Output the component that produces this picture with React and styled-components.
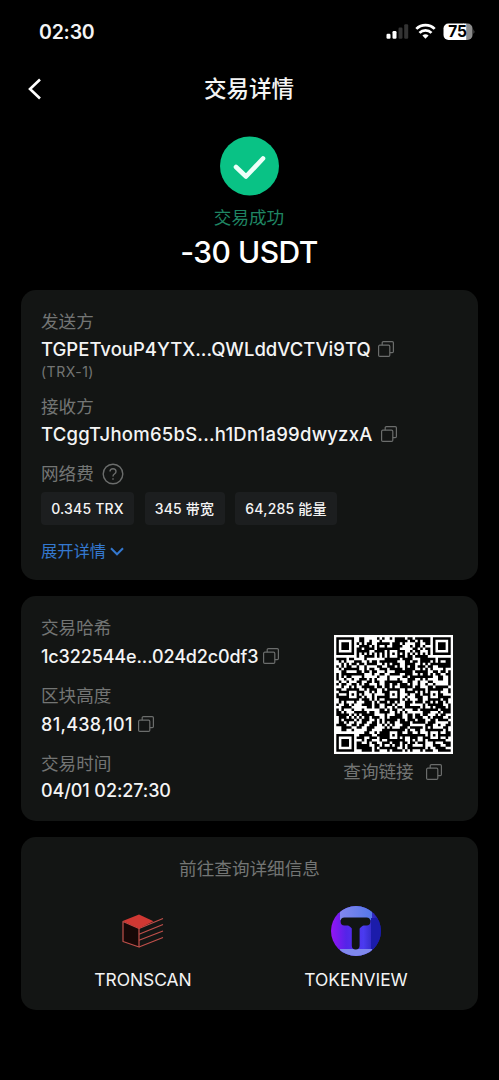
import React from 'react';
import styled, { createGlobalStyle } from 'styled-components'

const QR_SIZE = 45

// squelette d'un QR version 7 (45 modules) : repères, motifs d'alignement, le reste est rempli
const buildQr = () => {
	let seed = 81438101
	const rand = () => {
		seed = (seed * 48271) % 2147483647
		return seed / 2147483647
	}
	const grid = Array.from({length: QR_SIZE}, () =>
		Array.from({length: QR_SIZE}, () => rand() < 0.54)
	)
	const ring = (cx, cy, radius, isDark) => {
		for (let dy = -radius; dy <= radius; dy++) {
			for (let dx = -radius; dx <= radius; dx++) {
				const x = cx + dx
				const y = cy + dy
				if (x < 0 || y < 0 || x >= QR_SIZE || y >= QR_SIZE) continue
				grid[y][x] = isDark(Math.max(Math.abs(dx), Math.abs(dy)))
			}
		}
	}
	for (let i = 8; i < QR_SIZE - 8; i++) {
		grid[6][i] = i % 2 === 0
		grid[i][6] = i % 2 === 0
	}
	const finder = d => d !== 2 && d !== 4
	ring(3, 3, 4, finder)
	ring(41, 3, 4, finder)
	ring(3, 41, 4, finder)
	const align = d => d !== 1;
	[[22, 6], [6, 22], [22, 22], [38, 22], [22, 38], [38, 38]].forEach(([x, y]) => ring(x, y, 2, align))
	return grid.map((row, y) => row.map((on, x) => on ? `M${x} ${y}h1v1h-1z` : '').join('')).join('')
}

const qrPath = buildQr()

const CopyIcon = () => (
	<CopySvg viewBox="0 0 16 16">
		<rect x="0.6" y="4.2" width="11.2" height="11.2" rx="1.2" />
		<path d="M4.2 4.2V1.8Q4.2.6 5.4.6H14.2Q15.4.6 15.4 1.8V10.4Q15.4 11.6 14.2 11.6H11.8" />
	</CopySvg>
)

const StatusIcons = () => (
	<svg width="90" height="20" viewBox="0 0 90 20">
		<rect x="1.5" y="11.8" width="4" height="5" rx="1.2" fill="#fff" />
		<rect x="7.5" y="9" width="4" height="7.8" rx="1.2" fill="#fff" />
		<rect x="13.5" y="5.5" width="4" height="11.3" rx="1.2" fill="#333" />
		<rect x="19.2" y="2.3" width="4" height="14.5" rx="1.2" fill="#333" />
		<g fill="none" stroke="#fff" strokeWidth="2.7">
			<path d="M31.3 6.9A13 13 0 0 1 49.7 6.9" />
			<path d="M34.5 10.9A8.4 8.4 0 0 1 46.5 10.9" />
		</g>
		<path d="M40.5 16.8L37.4 13.6Q40.5 11 43.6 13.6Z" fill="#fff" />
		<path d="M63.5 1.5h15v16.5h-15a5 5 0 0 1-5-5v-6.5a5 5 0 0 1 5-5z" fill="#fff" />
		<path d="M81 1.5h1.5a5 5 0 0 1 5 5v6.5a5 5 0 0 1-5 5H81z" fill="#8c8c8c" />
		<rect x="78" y="1.5" width="3.2" height="16.5" fill="#fff" />
		<path d="M88.6 7q1.3 2.5 0 5z" fill="#8c8c8c" />
		<text x="72.4" y="15.4" textAnchor="middle" fontFamily="Inter, sans-serif" fontSize="15.5" fontWeight="700" letterSpacing="-0.3" fill="#000">75</text>
	</svg>
)

const TronscanLogo = () => (
	<svg width="42" height="34" viewBox="0 0 42 34">
		<g fill="none" stroke="#c0504b" strokeWidth="1.2" strokeLinejoin="round">
			<path d="M1 7.5V27.5L17 33V14.5Z" fill="#170807" />
			<path d="M17 14.5L41 4.5M17 20.2L41 10.5M17 26.2L41 17M17 33L41 23.5" />
		</g>
		<path d="M.7 7L17 .6L31.5 7.3L17 14.5Z" fill="#cf3833" />
	</svg>
)

const TokenviewLogo = () => (
	<svg width="50" height="50" viewBox="0 0 50 50">
		<defs>
			<clipPath id="disc"><circle cx="25" cy="25" r="25" /></clipPath>
			<linearGradient id="body">
				<stop offset="0" stopColor="#9614f5" />
				<stop offset="0.3" stopColor="#5524e8" />
				<stop offset="0.65" stopColor="#4a3bef" />
				<stop offset="1" stopColor="#1c1a9e" />
			</linearGradient>
			<linearGradient id="top">
				<stop offset="0" stopColor="#8288ee" />
				<stop offset="1" stopColor="#5577e8" />
			</linearGradient>
		</defs>
		<g clipPath="url(#disc)">
			<rect width="50" height="50" fill="url(#body)" />
			<rect x="9" width="32" height="14" fill="url(#top)" />
			<rect x="9" y="43" width="32" height="7" fill="#8089ee" />
			<rect x="40" y="12" width="10" height="31" fill="#1b1caa" />
		</g>
		<path d="M13.5 15.5H35.5M24.7 17V39.5" stroke="#111414" strokeWidth="7.8" strokeLinecap="round" />
		<path d="M17 19H32.5L28.5 22.5H21Z" fill="#111414" />
	</svg>
)

const App = () => (
	<Screen>
		<GlobalStyle />
		<StatusBar>
			<Clock>02:30</Clock>
			<StatusIcons />
		</StatusBar>

		<NavBar>
			<svg width="14" height="22" viewBox="0 0 14 22" fill="none" stroke="#fff" strokeWidth="2.6">
				<path d="M13 1.5L3 11L13 20.5" />
			</svg>
			<NavTitle>交易详情</NavTitle>
		</NavBar>

		<Summary>
			<svg width="60" height="60" viewBox="0 0 60 60" fill="none">
				<circle cx="30.5" cy="30" r="29.5" fill="#09c285" />
				<path d="M17 31L27 40.5L44 22.5" stroke="#edfff9" strokeWidth="4.6" strokeLinecap="round" strokeLinejoin="round" />
			</svg>
			<Success>交易成功</Success>
			<Amount>-30 USDT</Amount>
		</Summary>

		<Card $height={290}>
			<Label>发送方</Label>
			<Value $size={18.5} $spacing="0.01px" $gap={7}>TGPETvouP4YTX...QWLddVCTVi9TQ<CopyIcon /></Value>
			<Network>(TRX-1)</Network>
			<Label $top={12}>接收方</Label>
			<Value $size={18.5} $spacing="0.23px" $gap={8}>TCggTJhom65bS...h1Dn1a99dwyzxA<CopyIcon /></Value>
			<Label $top={16}>
				网络费
				<HelpSvg viewBox="0 0 22 22">
					<circle cx="11" cy="11" r="9.8" />
					<path d="M8 8.6Q8 5.7 11 5.7T14 8.5Q14 10 12.4 11Q11 12 11 13.4M11 15.3V16.7" />
				</HelpSvg>
			</Label>
			<Fees>
				<Fee $width={93}>0.345 TRX</Fee>
				<Fee $width={80}>345 带宽</Fee>
				<Fee $width={102}>64,285 能量</Fee>
			</Fees>
			<Expand>
				展开详情
				<svg width="14" height="9" viewBox="0 0 14 9" fill="none" stroke="#3478cf" strokeWidth="2">
					<path d="M1 1.3L7 7.3L13 1.3" />
				</svg>
			</Expand>
		</Card>

		<Card $height={225} $row>
			<div>
				<Label>交易哈希</Label>
				<Value $top={4} $spacing="-0.13px" $gap={5}>1c322544e...024d2c0df3<CopyIcon /></Value>
				<Label $top={16}>区块高度</Label>
				<Value $top={4} $spacing="0.3px" $gap={5}>81,438,101<CopyIcon /></Value>
				<Label $top={16}>交易时间</Label>
				<Value $top={2} $spacing="-0.1px">04/01 02:27:30</Value>
			</div>
			<QrColumn>
				<QrSvg viewBox="-0.9 -0.9 46.8 46.8">
					<path d={qrPath} />
				</QrSvg>
				<QrLink>查询链接<CopyIcon /></QrLink>
			</QrColumn>
		</Card>

		<Card $height={173}>
			<ExplorerTitle>前往查询详细信息</ExplorerTitle>
			<Explorers>
				<Explorer><LogoBox><TronscanLogo /></LogoBox>TRONSCAN</Explorer>
				<Explorer><LogoBox><TokenviewLogo /></LogoBox>TOKENVIEW</Explorer>
			</Explorers>
		</Card>
	</Screen>
);

const GlobalStyle = createGlobalStyle`
	body {
		margin: 0;
		background: #000;
	}
	svg {
		display: block;
		flex-shrink: 0;
	}
`

const Screen = styled.div`
	box-sizing: border-box;
	width: 499px;
	height: 1080px;
	overflow: hidden;
	background: #000;
	color: #f4f4f4;
	font-family: Inter, "Noto Sans CJK SC", sans-serif;
`

const StatusBar = styled.header`
	box-sizing: border-box;
	height: 64px;
	padding: 22px 24px 0 39px;
	display: flex;
	align-items: flex-start;
	justify-content: space-between;
`

const Clock = styled.span`
	font-size: 19.5px;
	line-height: 20px;
	font-weight: 600;
	letter-spacing: -0.2px;
`

const NavBar = styled.nav`
	height: 49px;
	padding: 0 28px 0 27px;
	display: grid;
	grid-template-columns: 14px 1fr 14px;
	align-items: center;
`

const NavTitle = styled.h1`
	margin: 0;
	text-align: center;
	font-size: 22.5px;
	line-height: 30px;
	font-weight: 500;
`

const Summary = styled.section`
	height: 177px;
	padding: 23px 1px 0 0;
	box-sizing: border-box;
	display: flex;
	flex-direction: column;
	align-items: center;
`

const Success = styled.div`
	margin-top: 10px;
	font-size: 17.6px;
	line-height: 24px;
	color: #1f8563;
`

const Amount = styled.div`
	margin-top: 3px;
	font-size: 30px;
	line-height: 38px;
	font-weight: 500;
	letter-spacing: -0.5px;
	color: #fff;
`

const Card = styled.section`
	box-sizing: border-box;
	height: ${p => p.$height}px;
	margin: 0 21px 16px;
	padding: 20px 20px 0;
	border-radius: 15px;
	background: #131514;
	${p => p.$row && 'display: flex; justify-content: space-between;'}
`

const Label = styled.div`
	display: flex;
	align-items: center;
	gap: 8px;
	margin-top: ${p => p.$top || 0}px;
	font-size: 17.6px;
	line-height: 24px;
	height: 24px;
	color: #737574;
`

const Value = styled.div`
	display: flex;
	align-items: center;
	gap: ${p => p.$gap || 0}px;
	margin-top: ${p => p.$top || 3}px;
	font-size: ${p => p.$size || 18}px;
	line-height: 25px;
	height: 24px;
	font-weight: 500;
	white-space: nowrap;
	letter-spacing: ${p => p.$spacing || 0};
`

const Network = styled.div`
	font-size: 14px;
	line-height: 22px;
	color: #737574;
	letter-spacing: 0.5px;
`

const CopySvg = styled.svg`
	width: 16px;
	height: 16px;
	fill: none;
	stroke: #6b6d6c;
	stroke-width: 1.2;
`

const HelpSvg = styled.svg`
	width: 22px;
	height: 22px;
	fill: none;
	stroke: #6b6d6c;
	stroke-width: 1.4;
`

const Fees = styled.div`
	display: flex;
	gap: 10.5px;
	margin-top: 6px;
`

const Fee = styled.span`
	width: ${p => p.$width}px;
	height: 33px;
	border-radius: 4px;
	background: #1c1e1f;
	text-align: center;
	font-size: 14px;
	line-height: 33px;
	font-weight: 500;
	letter-spacing: 0.2px;
	white-space: nowrap;
`

const Expand = styled.div`
	display: flex;
	align-items: center;
	gap: 4px;
	margin-top: 14px;
	font-size: 16.3px;
	line-height: 24px;
	color: #3478cf;
`

const QrColumn = styled.div`
	display: flex;
	flex-direction: column;
	align-items: center;
	margin: 19px 5px 0 0;
`

const QrSvg = styled.svg`
	width: 119px;
	height: 119px;
	background: #fff;
`

const QrLink = styled.div`
	display: flex;
	align-items: center;
	gap: 12px;
	margin-top: 6px;
	padding-right: 2px;
	font-size: 17.6px;
	line-height: 24px;
	color: #737574;
`

const ExplorerTitle = styled.div`
	text-align: center;
	font-size: 17.6px;
	line-height: 24px;
	color: #737574;
`

const Explorers = styled.div`
	display: grid;
	grid-template-columns: 204px 222px;
	margin-top: 21px;
`

const Explorer = styled.div`
	display: flex;
	flex-direction: column;
	align-items: center;
	font-size: 17.4px;
	line-height: 24px;
`

const LogoBox = styled.div`
	height: 57px;
	padding-bottom: 9px;
	display: flex;
	align-items: center;
`

export default App;
